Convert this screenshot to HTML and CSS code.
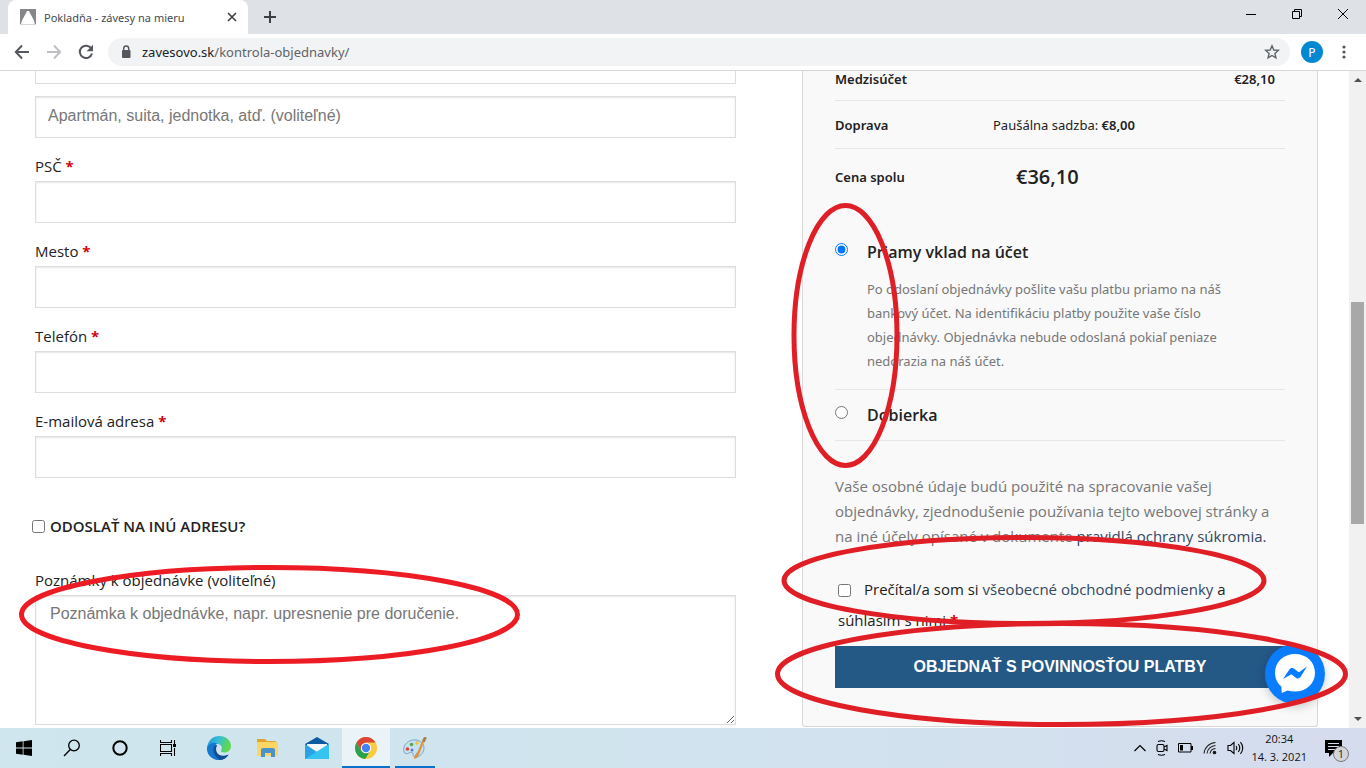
FILE: index.html
```html
<!DOCTYPE html>
<html lang="sk">
<head>
<meta charset="utf-8">
<title>Pokladňa - závesy na mieru</title>
<link rel="stylesheet" href="styles.css">
</head>
<body>
<header class="browser">
  <div class="tabstrip">
    <div class="tab">
      <svg class="favicon" width="16" height="16" viewBox="0 0 16 16"><path d="M0 0h16v16h-1C14.500 10 11 7 9 2H7C5 7 1.500 10 1 16H0z" fill="#85858a"/><path d="M0 15.500h16" stroke="#d8d8d8"/></svg>
      <span class="tab-title">Pokladňa - závesy na mieru</span>
      <button class="icon-btn tab-close" aria-label="Zavrieť kartu"><svg width="10" height="10" viewBox="0 0 10 10"><path d="M1 1l8 8M9 1l-8 8" stroke="#3c4043" stroke-width="1.600"/></svg></button>
    </div>
    <button class="icon-btn new-tab" aria-label="Nová karta"><svg width="14" height="14" viewBox="0 0 14 14"><path d="M7 1v12M1 7h12" stroke="#3c4043" stroke-width="2"/></svg></button>
    <div class="window-controls">
      <button class="icon-btn" aria-label="Minimalizovať"><svg width="12" height="12" viewBox="0 0 12 12"><path d="M1 6.500h10" stroke="#000"/></svg></button>
      <button class="icon-btn" aria-label="Obnoviť"><svg width="12" height="12" viewBox="0 0 12 12"><path d="M1.500 3.500h7v7h-7zM3.500 3.500v-2h7v7h-2" fill="none" stroke="#000"/></svg></button>
      <button class="icon-btn" aria-label="Zavrieť"><svg width="12" height="12" viewBox="0 0 12 12"><path d="M1 1l10 10M11 1L1 11" stroke="#000"/></svg></button>
    </div>
  </div>
  <div class="toolbar">
    <div class="nav">
      <button class="icon-btn" aria-label="Späť"><svg width="16" height="16" viewBox="0 0 16 16"><path d="M15 8H2M8 1.500L1.800 8 8 14.500" fill="none" stroke="#54575b" stroke-width="1.900"/></svg></button>
      <button class="icon-btn" aria-label="Dopredu"><svg width="16" height="16" viewBox="0 0 16 16"><path d="M1 8h13M8 1.500L14.200 8 8 14.500" fill="none" stroke="#bcbec1" stroke-width="1.900"/></svg></button>
      <button class="icon-btn" aria-label="Obnoviť stránku"><svg width="16" height="16" viewBox="0 0 16 16"><path d="M13.300 4.600A6.200 6.200 0 1 0 14 9.500" fill="none" stroke="#54575b" stroke-width="2"/><path d="M15 .8v6.400H8.600z" fill="#54575b"/></svg></button>
    </div>
    <div class="omnibox">
      <svg width="10" height="14" viewBox="0 0 10 14"><rect x="1" y="5" width="8.500" height="8" rx="1" fill="#54575b"/><path d="M2.700 6V3.500a2.500 2.500 0 0 1 5 0V6" fill="none" stroke="#54575b" stroke-width="1.400"/></svg>
      <span class="url"><span class="host">zavesovo.sk</span>/kontrola-objednavky/</span>
      <button class="icon-btn star" aria-label="Záložka"><svg width="16" height="16" viewBox="0 0 16 16"><path d="M8 1.800l1.800 4.200 4.500.4-3.400 3 1 4.400L8 11.500l-3.900 2.300 1-4.400-3.400-3 4.500-.4z" fill="none" stroke="#5f6368" stroke-width="1.400"/></svg></button>
    </div>
    <button class="avatar">P</button>
    <button class="icon-btn kebab" aria-label="Menu"><svg width="4" height="14" viewBox="0 0 4 14" fill="#54575b"><circle cx="2" cy="2" r="1.600"/><circle cx="2" cy="7" r="1.600"/><circle cx="2" cy="12" r="1.600"/></svg></button>
  </div>
</header>

<div class="viewport">
  <main class="page">
    <form class="billing">
      <input class="field cut" type="text" aria-label="Ulica">
      <input class="field" type="text" aria-label="Apartmán" placeholder="Apartmán, suita, jednotka, atď. (voliteľné)">
      <label class="field-label" for="psc">PSČ <b class="req">*</b></label>
      <input class="field" id="psc" type="text">
      <label class="field-label" for="mesto">Mesto <b class="req">*</b></label>
      <input class="field" id="mesto" type="text">
      <label class="field-label" for="tel">Telefón <b class="req">*</b></label>
      <input class="field" id="tel" type="tel">
      <label class="field-label" for="email">E-mailová adresa <b class="req">*</b></label>
      <input class="field" id="email" type="email">
      <div class="ship">
        <input class="tick" type="checkbox" id="ship"><label for="ship">ODOSLAŤ NA INÚ ADRESU?</label>
      </div>
      <label class="field-label" for="note">Poznámky k objednávke (voliteľné)</label>
      <textarea class="note" id="note" placeholder="Poznámka k objednávke, napr. upresnenie pre doručenie."></textarea>
    </form>

    <section class="order">
      <table class="totals">
        <tr><th scope="row">Medzisúčet</th><td class="subtotal">€28,10</td></tr>
        <tr><th scope="row">Doprava</th><td class="shipping">Paušálna sadzba: <b>€8,00</b></td></tr>
        <tr><th scope="row">Cena spolu</th><td class="total">€36,10</td></tr>
      </table>
      <div class="payment">
        <div class="method">
          <input class="radio" type="radio" name="pay" id="bank" checked><label for="bank">Priamy vklad na účet</label>
        </div>
        <p class="method-info">Po odoslaní objednávky pošlite vašu platbu priamo na náš<br>bankový účet. Na identifikáciu platby použite vaše číslo<br>objednávky. Objednávka nebude odoslaná pokiaľ peniaze<br>nedorazia na náš účet.</p>
      </div>
      <div class="payment second">
        <div class="method">
          <input class="radio" type="radio" name="pay" id="cod"><label for="cod">Dobierka</label>
        </div>
      </div>
      <p class="privacy">Vaše osobné údaje budú použité na spracovanie vašej<br>objednávky, zjednodušenie používania tejto webovej stránky a<br>na iné účely opísané v dokumente <a href="#">pravidlá ochrany súkromia.</a></p>
      <div class="terms">
        <input class="tick" type="checkbox" id="terms"><label for="terms">Prečítal/a som si <a href="#">všeobecné obchodné podmienky</a> a<br>súhlasím s nimi <b class="req">*</b></label>
      </div>
      <button class="submit">OBJEDNAŤ S POVINNOSŤOU PLATBY</button>
    </section>

    <button class="messenger" aria-label="Messenger">
      <svg width="60" height="60" viewBox="0 0 60 60"><circle cx="30" cy="30" r="30" fill="#0a7cff"/><path d="M30 10c-11.300 0-20 8-20 18.800 0 5.600 2.400 10.400 6.300 13.700l.5 6.500 5.800-2.500c2.300.7 4.800 1.100 7.400 1.100 11.300 0 20-8 20-18.800S41.300 10 30 10z" fill="#fff"/><path d="M18 35l6.500-9.700c1-1.500 3-1.800 4.400-.8l4.200 3.200c.5.400 1 .4 1.500 0L42 22.500 35.500 33c-1 1.500-3 1.900-4.400.9L27 30.700c-.5-.4-1-.4-1.500 0z" fill="#0a7cff"/></svg>
    </button>
  </main>
  <div class="scrollbar">
    <svg width="17" height="17" viewBox="0 0 17 17"><path d="M5 11l4-4 4 4z" fill="#505050"/></svg>
    <div class="track"><div class="thumb"></div></div>
    <svg width="17" height="17" viewBox="0 0 17 17"><path d="M5 6h8l-4 4z" fill="#505050"/></svg>
  </div>
</div>

<footer class="taskbar">
  <button class="task" aria-label="Štart"><svg width="16" height="16" viewBox="0 0 16 16"><path d="M0 2.200L6.700 1.300v6.200H0zM7.500 1.200L16 0v7.500H7.500zM0 8.400h6.700v6.300L0 13.800zM7.500 8.400H16V16l-8.500-1.200z"/></svg></button>
  <button class="task" aria-label="Hľadať"><svg width="18" height="18" viewBox="0 0 18 18" fill="none" stroke="#000" stroke-width="1.300"><circle cx="11" cy="6.500" r="5.300"/><path d="M7.300 10.500L1 17"/></svg></button>
  <button class="task" aria-label="Cortana"><svg width="16" height="16" viewBox="0 0 16 16"><circle cx="8" cy="8" r="6.700" fill="none" stroke="#000" stroke-width="2"/></svg></button>
  <button class="task" aria-label="Zobrazenie úloh"><svg width="16" height="16" viewBox="0 0 16 16" fill="none" stroke="#000" stroke-width="1.100"><path d="M.5 0v2.500h11V0M.5 16v-2.500h11V16M.5 4.500h11v7H.5zM14.500 0v4M14.500 8v8"/><path d="M13 4h3v3h-3z" fill="#000" stroke="none"/></svg></button>
  <button class="task first-app" aria-label="Edge"><svg width="24" height="24" viewBox="0 0 24 24">
    <defs><linearGradient id="eg" x1="0" y1="0" x2="1" y2=".3"><stop offset="0" stop-color="#1d8fd8"/><stop offset=".5" stop-color="#35bfd5"/><stop offset="1" stop-color="#62d84e"/></linearGradient></defs>
    <path d="M0 12C1 4 6 0 12.500 0 19 0 24 4.500 24 10c0 4-3 6.500-6.500 6.500-2.500 0-4-.8-3.500-2 1.800-2.500.8-5.500-3-6.500C6 6.500 1.500 8.500 0 12z" fill="url(#eg)"/>
    <path d="M0 12c1-4 6-6.500 10.500-4.500C7 9 6.500 13 8 16c2 4 7.500 6 13.500 2.500C19 22.500 16 24 12 24 5 24-.5 18.500 0 12z" fill="#1478cf"/>
    <path d="M8.500 9C4.500 12 6 20 13 23.900 17 23.700 20 21.500 21.700 18.500 17 21 11 20 9.500 15.500c-.8-2.500-.5-4.500.8-6.300z" fill="#104f94"/></svg></button>
  <button class="task" aria-label="Prieskumník"><svg width="22" height="20" viewBox="0 0 22 20"><path d="M1 1h8l2 2h9v5H1z" fill="#e2a52c"/><path d="M2 4h20v14H1V5z" fill="#fbd667"/><path d="M5 19v-7q0-2 2-2h10q2 0 2 2v7h-4v-4H9v4z" fill="#4a92c9"/></svg></button>
  <button class="task app" aria-label="Pošta"><svg width="24" height="22" viewBox="0 0 24 22"><path d="M0 7l12-7 12 7v3H0z" fill="#0c5a9f"/><path d="M2 7h20v9H2z" fill="#f4f8fb"/><path d="M0 7l12 8L24 7v15H0z" fill="#2aa2e4"/><path d="M0 22L24 7v15z" fill="#35c3f0"/></svg></button>
  <button class="task app active" aria-label="Chrome"><svg width="22" height="22" viewBox="0 0 22 22"><circle cx="11" cy="11" r="11" fill="#fbca3e"/><path d="M1.500 5.500A11 11 0 0 1 20.500 5.500H11L6.200 13.700z" fill="#dc4437"/><path d="M1.500 5.500A11 11 0 0 0 10.200 22l5-8.200H6.200z" fill="#2ba24c"/><circle cx="11" cy="11" r="5.200" fill="#fff"/><circle cx="11" cy="11" r="4.200" fill="#4384f3"/></svg></button>
  <button class="task open" aria-label="Skicár"><svg width="24" height="24" viewBox="0 0 24 24"><path d="M1 16C-1 9 6 3 13 4c5 .5 8 4 8 8s-3 8-7 9c-3 .8-4-1-4-3s-2-2-4-1-4 1-5-1z" fill="#c8e1f1" stroke="#78a8c6"/><circle cx="4.500" cy="13" r="1.800" fill="#e34234"/><circle cx="8.500" cy="8.500" r="1.800" fill="#4fae46"/><circle cx="14" cy="7" r="1.800" fill="#f2c037"/><circle cx="9" cy="14" r="1.500" fill="#4b82d0"/><path d="M11 23c0-4 3-6 4-8l4-10 2 1-4 10c-1 3-2 6-6 7z" fill="#dc9340"/><path d="M19 5l2-4 3 .5-2.500 5z" fill="#a97a4a"/></svg></button>
  <div class="tray">
    <svg width="12" height="8" viewBox="0 0 12 8"><path d="M.5 7L6 1.500 11.500 7" fill="none" stroke="#000" stroke-width="1.200"/></svg>
    <svg width="12" height="16" viewBox="0 0 12 16" fill="none" stroke="#000" stroke-width="1.100"><rect x="1" y="4.500" width="7" height="7" rx="1.500"/><path d="M8 7l3-1.500v5L8 9M2 1.500Q5.500 0 9 1.500M2 14.500Q5.500 16 9 14.500"/></svg>
    <svg width="15" height="10" viewBox="0 0 15 10"><path d="M.5.500h12.500v8.500H.5z" fill="none" stroke="#000"/><path d="M2 2h3v5.500H2zM13 3h2v4h-2z"/></svg>
    <svg width="14" height="14" viewBox="0 0 14 14" fill="none" stroke="#222" stroke-width="1.100"><path d="M1 12.500A12 12 0 0 1 12.500 1.500M4 12.500a9 9 0 0 1 8.500-8M7 12.500a6 6 0 0 1 5.500-5"/><circle cx="11.500" cy="11.500" r="1.300" fill="#000"/></svg>
    <svg width="17" height="14" viewBox="0 0 17 14" fill="none" stroke="#000" stroke-width="1.100"><path d="M1 4.500h2.500l3.500-3v11l-3.500-3H1zM9 5q1.500 2 0 4M11.300 3q3 4 0 8M13.500 1.200q4.500 5.800 0 11.600"/></svg>
    <div class="clock"><span>20:34</span><span>14. 3. 2021</span></div>
    <button class="notify" aria-label="Oznámenia"><svg width="17" height="17" viewBox="0 0 17 17"><path d="M0 0h17v13h-9l-4 4v-4H0z"/><path d="M3 3.500h11M3 6.500h11M3 9.500h7" stroke="#d7dfee"/></svg><span class="badge">1</span></button>
  </div>
</footer>

<svg class="marks" viewBox="0 0 1366 768" preserveAspectRatio="none" fill="none" stroke="#e01e26" stroke-width="5">
  <ellipse cx="845.500" cy="335.500" rx="51.500" ry="130"/>
  <ellipse cx="1024" cy="580.500" rx="240" ry="43"/>
  <ellipse cx="1061.500" cy="674" rx="284" ry="50.500"/>
  <ellipse cx="269.500" cy="614.500" rx="248" ry="47" stroke="#ed1c24"/>
</svg>
</body>
</html>
```

FILE: styles.css
```css
* { box-sizing: border-box; }
body {
  margin: 0;
  height: 100vh;
  display: flex;
  flex-direction: column;
  overflow: hidden;
  position: relative;
  background: #fff;
  color: #222;
  font-family: "Open Sans", "Noto Sans", sans-serif;
  font-size: 15px;
}
button { font: inherit; color: inherit; border: 0; padding: 0; background: none; }
svg { display: block; flex: none; }
p { margin: 0; }
a { color: #334862; text-decoration: none; }
.icon-btn { display: grid; place-items: center; width: 16px; height: 16px; }

/* browser frame */
.browser { flex: none; border-bottom: 1px solid #d5d7d9; font-family: "Noto Sans", sans-serif; }
.tabstrip { display: flex; align-items: center; height: 34px; padding-left: 8px; background: #dee1e6; }
.tab {
  display: flex;
  align-items: center;
  align-self: stretch;
  width: 240px;
  padding: 0 8px 0 12px;
  background: #fff;
  border-radius: 8px 8px 0 0;
}
.tab-title { margin-left: 8px; font-size: 11px; color: #45494d; }
.tab-close { margin-left: auto; }
.new-tab { margin-left: 14px; }
.window-controls { display: flex; gap: 30px; margin-left: auto; padding: 0 15px 6px 0; }
.toolbar { display: flex; align-items: center; height: 36px; padding: 0 20px 0 14px; }
.nav { display: flex; gap: 16px; }
.omnibox {
  flex: 1;
  display: flex;
  align-items: center;
  height: 28px;
  margin: 0 11px 0 14px;
  padding: 0 10px 0 13px;
  border-radius: 14px;
  background: #f1f3f4;
}
.url { margin-left: 11px; font-size: 13px; color: #5f6368; }
.host { color: #202124; }
.star { margin-left: auto; }
.avatar {
  width: 22px;
  height: 22px;
  border-radius: 50%;
  background: #0288d1;
  color: #fff;
  font-size: 12px;
}
.kebab { width: 4px; margin-left: 19px; }

/* page */
.viewport { flex: 1; min-height: 0; display: flex; }
.page {
  flex: 1;
  position: relative;
  display: grid;
  grid-template-columns: 701fr 516fr;
  gap: 66px;
  padding: 0 31px 0 35px;
  overflow: hidden;
  align-items: start;
}
.billing { display: flex; flex-direction: column; }
.field, .note {
  width: 100%;
  margin: 0;
  border: 1px solid #ddd;
  border-radius: 0;
  background: #fff;
  box-shadow: inset 0 1px 2px rgba(0, 0, 0, .1);
  font-family: "Liberation Sans", Arial, sans-serif;
  font-size: 16px;
  outline: 0;
}
.field { height: 42px; padding: 0 12px 2px; }
.cut { height: 13px; border-top: 0; box-shadow: none; margin-bottom: 12px; }
.field::placeholder, .note::placeholder { color: #777; opacity: 1; }
.field-label { padding: 16px 0 3px; line-height: 24px; }
.req { color: #d2050e; font-weight: 700; }
.tick, .radio { flex: none; width: 13px; height: 13px; margin: 0; }
.ship {
  display: flex;
  align-items: center;
  gap: 5px;
  margin: 36px 0 14px -3px;
  line-height: 24px;
  font-size: 15px;
  font-weight: 600;
}
.note { display: block; height: 130px; padding: 8px 14px; line-height: 20px; resize: vertical; }

.order {
  height: 656px;
  padding: 0 32px;
  border: 1px solid #d8d8d8;
  border-top: 0;
  border-radius: 0 0 3px 3px;
  background: #f9f9f9;
  white-space: nowrap;
}
.totals { width: 100%; border-collapse: collapse; font-family: "Noto Sans", sans-serif; font-size: 13px; }
.totals th, .totals td { padding: 0; text-align: left; border-bottom: 1px solid #e6e6e6; }
.totals th { width: 158px; font-weight: 600; }
.totals tr { height: 48px; }
.totals tr:first-child { height: 29px; }
.totals tr:first-child th, .totals tr:first-child td { padding-bottom: 12px; line-height: 17px; }
.totals tr:last-child { height: 56px; }
.totals tr:last-child th, .totals tr:last-child td { border: 0; }
.totals b { font-weight: 600; }
.totals .subtotal { padding-right: 10px; text-align: right; font-weight: 600; }
.totals .total { padding-left: 23px; font-family: "Open Sans", sans-serif; font-size: 20px; font-weight: 600; }

.payment { padding: 34px 0 16px; border-bottom: 1px solid #e6e6e6; }
.second { padding: 12px 0; }
.method { display: flex; align-items: flex-start; gap: 19px; line-height: 26px; font-size: 16px; font-weight: 600; }
.radio { margin-top: 4px; }
.method-info {
  margin-top: 12px;
  padding-left: 32px;
  line-height: 24px;
  font-family: "Noto Sans", sans-serif;
  font-size: 13px;
  color: #777;
}
.privacy { margin-top: 33px; line-height: 25px; color: #777; }
.terms { margin-top: 25px; padding-left: 3px; line-height: 31px; }
.terms .tick { margin-right: 13px; vertical-align: -2px; }
.submit {
  display: block;
  width: 100%;
  height: 42px;
  margin-top: 10px;
  background: #245885;
  color: #fff;
  font: 700 16px "Liberation Sans", Arial, sans-serif;
}
.messenger {
  position: absolute;
  right: 24px;
  bottom: 24px;
  width: 60px;
  height: 60px;
  border-radius: 50%;
  box-shadow: 0 3px 10px rgba(0, 0, 0, .2);
}

.scrollbar { display: flex; flex-direction: column; width: 17px; background: #f1f1f1; }
.track { flex: 1; padding: 214px 2px 0; }
.thumb { height: 222px; background: #a8a8a8; }

/* taskbar */
.taskbar {
  flex: none;
  display: flex;
  height: 40px;
  background: linear-gradient(90deg, #cfe6ee, #d0e4ee 45%, #d5dced);
}
.task { display: grid; place-items: center; width: 48px; height: 40px; border-bottom: 2px solid transparent; padding-top: 1px; }
.first-app { margin-left: 3px; }
.app { margin-left: 2px; }
.active { margin-left: 1px; background: #eaf4f8; border-color: #0a72cb; }
.open { width: 40px; margin-left: 5px; border-color: #0a72cb; }
.tray { display: flex; align-items: center; gap: 10px; margin-left: auto; padding-right: 24px; }
.clock { display: flex; flex-direction: column; align-items: center; margin-left: -3px; font-size: 11px; line-height: 18px; color: #111; }
.notify { position: relative; margin-left: 8px; }
.badge {
  position: absolute;
  left: 8px;
  top: 6px;
  width: 16px;
  height: 16px;
  border: 1px solid #777;
  border-radius: 50%;
  background: #d3d5da;
  font-size: 11px;
  line-height: 14px;
  text-align: center;
}

/* hand-drawn highlight rings */
.marks { position: absolute; inset: 0; width: 100%; height: 100%; pointer-events: none; }
```
